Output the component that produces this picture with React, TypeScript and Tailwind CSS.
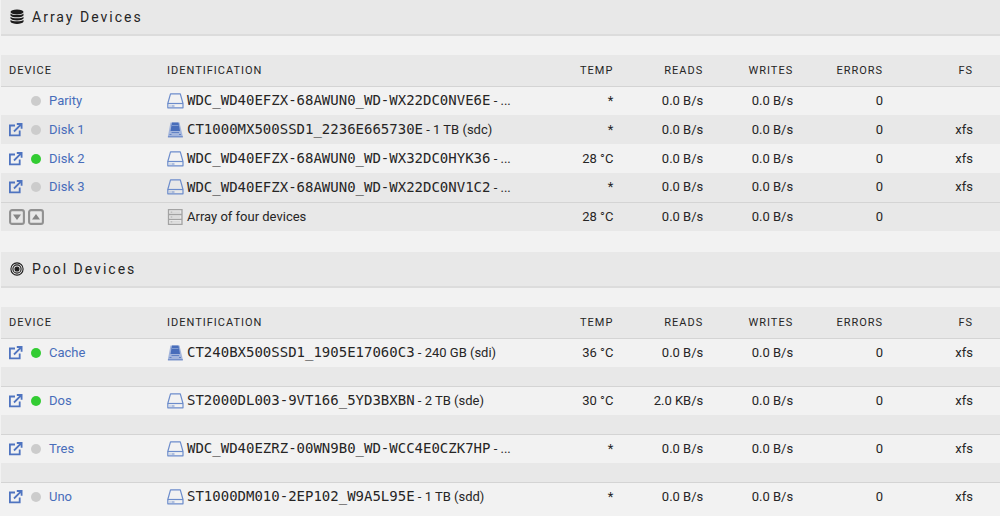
import { Fragment, ReactNode } from 'react';
import clsx from 'clsx';

type Device = {
  name: string;
  active?: boolean;
  kind: 'hdd' | 'ssd';
  id: string;
  info: string;
  temp: string;
  reads: string;
  fs: string;
};

const arrayDevices: Device[] = [
  { name: 'Parity', kind: 'hdd', id: 'WDC_WD40EFZX-68AWUN0_WD-WX22DC0NVE6E', info: '...', temp: '*', reads: '0.0 B/s', fs: '' },
  { name: 'Disk 1', kind: 'ssd', id: 'CT1000MX500SSD1_2236E665730E', info: '1 TB (sdc)', temp: '*', reads: '0.0 B/s', fs: 'xfs' },
  { name: 'Disk 2', active: true, kind: 'hdd', id: 'WDC_WD40EFZX-68AWUN0_WD-WX32DC0HYK36', info: '...', temp: '28 °C', reads: '0.0 B/s', fs: 'xfs' },
  { name: 'Disk 3', kind: 'hdd', id: 'WDC_WD40EFZX-68AWUN0_WD-WX22DC0NV1C2', info: '...', temp: '*', reads: '0.0 B/s', fs: 'xfs' },
];

const poolDevices: Device[] = [
  { name: 'Cache', active: true, kind: 'ssd', id: 'CT240BX500SSD1_1905E17060C3', info: '240 GB (sdi)', temp: '36 °C', reads: '0.0 B/s', fs: 'xfs' },
  { name: 'Dos', active: true, kind: 'hdd', id: 'ST2000DL003-9VT166_5YD3BXBN', info: '2 TB (sde)', temp: '30 °C', reads: '2.0 KB/s', fs: 'xfs' },
  { name: 'Tres', kind: 'hdd', id: 'WDC_WD40EZRZ-00WN9B0_WD-WCC4E0CZK7HP', info: '...', temp: '*', reads: '0.0 B/s', fs: 'xfs' },
  { name: 'Uno', kind: 'hdd', id: 'ST1000DM010-2EP102_W9A5L95E', info: '1 TB (sdd)', temp: '*', reads: '0.0 B/s', fs: 'xfs' },
];

const DatabaseIcon = () => (
  <svg width="14" height="16" viewBox="0 0 14 16" fill="#1c1b1b">
    <ellipse cx="7" cy="3" rx="6.5" ry="2.5" />
    <path d="M.5 4.6C2 6.6 12 6.6 13.5 4.6v1.8C12 9 2 9 .5 6.4z" />
    <path d="M.5 7.7C2 9.7 12 9.7 13.5 7.7v1.8C12 12.1 2 12.1 .5 9.5z" />
    <path d="M.5 10.8C2 12.8 12 12.8 13.5 10.8v2C12 15.6 2 15.6 .5 12.8z" />
  </svg>
);

const TargetIcon = () => (
  <svg width="14" height="14" viewBox="0 0 14 14" fill="none" stroke="#1c1b1b" strokeWidth="1.1">
    <circle cx="7" cy="7" r="6.1" />
    <circle cx="7" cy="7" r="4.1" />
    <circle cx="7" cy="7" r="2" fill="#1c1b1b" />
  </svg>
);

const OpenIcon = () => (
  <svg width="14" height="14" viewBox="0 0 14 14" fill="none" stroke="#4f74c0" strokeWidth="1.8">
    <path d="M6 2.5H.9v9.8h9.8V7.5" />
    <path d="M7.8 1h4.8v4.8M12.3 1.2L5 8.5" />
  </svg>
);

const HddIcon = () => (
  <svg width="17" height="16" viewBox="0 0 17 16" fill="none" stroke="#6c8ccb">
    <path d="M3.5 .8h9.8L16 10.5v4.3H.8v-4.3z" strokeLinejoin="round" strokeWidth="1.2" />
    <path d="M.8 10.5H16" strokeWidth="1.2" />
    <path d="M2.5 13h1M4.5 13h3" />
  </svg>
);

const SsdIcon = () => (
  <svg width="17" height="16" viewBox="0 0 17 16">
    <path d="M3.5 .5h9l3.5 14.8H.7z" fill="#a3b5dc" />
    <path d="M5 .5h6.5l1.5 8.5H3.5z" fill="#486dba" />
    <path d="M5 3.5h6.5" stroke="#8ea6d6" strokeWidth=".8" />
    <path d="M4.5 10.5h7.5M1 14.8h14.8M2.5 12.5h2M12 12.5h2" stroke="#6282c4" />
  </svg>
);

const ServerIcon = () => (
  <svg width="17" height="16" viewBox="0 0 17 16" fill="none" stroke="#a3a3a3">
    <path d="M1.5 .7h13.5v14.6H1.5zM1.5 5.5H15M1.5 10.4H15" strokeWidth="1.3" />
    <path d="M3.5 3.1h2M3.5 8h2M3.5 12.9h2" />
    <path d="M6 3.1h7M6 8h7M6 12.9h7" strokeOpacity=".35" />
  </svg>
);

const SortButton = ({ label, path }: { label: string; path: string }) => (
  <button type="button" aria-label={label} className="cursor-pointer">
    <svg width="16" height="16" viewBox="0 0 16 16">
      <rect x="1.1" y="1.1" width="13.8" height="13.8" rx="2" fill="none" stroke="#919191" strokeWidth="2.1" />
      <path d={path} fill="#858585" />
    </svg>
  </button>
);

const columns = ['Temp', 'Reads', 'Writes', 'Errors', 'FS'];

const Values = ({ values }: { values: string[] }) => (
  <>
    {values.map((value, i) => (
      <td key={columns[i]} className="pr-[27px] text-right">
        {value}
      </td>
    ))}
  </>
);

const DeviceRow = ({ device, shaded }: { device: Device; shaded?: boolean }) => (
  <tr className={clsx('h-[29px]', shaded && 'bg-[#e8e8e8]')}>
    <td className="pl-2">
      <div className="flex items-center">
        <span className="w-[22px]">
          {device.name !== 'Parity' && (
            <a href="#browse" aria-label={`Browse ${device.name}`}>
              <OpenIcon />
            </a>
          )}
        </span>
        <span
          className={clsx(
            'mr-2 size-[10px] rounded-full',
            device.active ? 'bg-[#33cc33]' : 'bg-[#cccccc]'
          )}
        />
        <a href="#device" className="text-[#486dba]">
          {device.name}
        </a>
      </div>
    </td>
    <td className="pl-2">
      <div className="flex items-center gap-[3px] whitespace-nowrap">
        {device.kind === 'hdd' ? <HddIcon /> : <SsdIcon />}
        <span>
          <span className="font-['DejaVu_Sans_Mono',monospace] text-[14px]">{device.id}</span> -{' '}
          {device.info}
        </span>
      </div>
    </td>
    <Values values={[device.temp, device.reads, '0.0 B/s', '0', device.fs]} />
  </tr>
);

const Section = ({ title, icon, children }: { title: string; icon: ReactNode; children: ReactNode }) => (
  <section>
    <h2 className="flex h-9 items-center gap-2 border-b-2 border-[#dcdcdc] bg-[#e8e8e8] pl-[9px] text-[14px] tracking-[2px]">
      {icon}
      {title}
    </h2>
    <table className="mt-[19px] w-full table-fixed border-collapse">
      <colgroup>
        <col className="w-[158px]" />
        <col />
        {columns.map((column) => (
          <col key={column} className="w-[9%]" />
        ))}
      </colgroup>
      <thead>
        <tr className="h-[31px] border-b border-[#d4d4d4] bg-[#e8e8e8] text-[11px] uppercase tracking-[1px]">
          <th className="pt-px pl-2 text-left font-normal">Device</th>
          <th className="pt-px pl-2 text-left font-normal">Identification</th>
          {columns.map((column) => (
            <th key={column} className="pt-px pr-[27px] text-right font-normal">
              {column}
            </th>
          ))}
        </tr>
      </thead>
      <tbody>{children}</tbody>
    </table>
  </section>
);

const App = () => {
  return (
    <main className="flex min-h-screen flex-col gap-[21px] overflow-hidden bg-[#f2f2f2] pl-px font-[Roboto,sans-serif] text-[13px] leading-4 text-[#262525]">
      <Section title="Array Devices" icon={<DatabaseIcon />}>
        {arrayDevices.map((device, i) => (
          <DeviceRow key={device.name} device={device} shaded={i % 2 === 1} />
        ))}
        <tr className="h-[29px] border-t border-[#d4d4d4] bg-[#e8e8e8]">
          <td className="pl-2">
            <div className="flex gap-[3px]">
              <SortButton label="Spin down" path="M4 5.5h8L8 11z" />
              <SortButton label="Spin up" path="M4 10.5h8L8 5z" />
            </div>
          </td>
          <td className="pl-2">
            <div className="flex items-center gap-[3px]">
              <ServerIcon />
              Array of four devices
            </div>
          </td>
          <Values values={['28 °C', '0.0 B/s', '0.0 B/s', '0', '']} />
        </tr>
      </Section>

      <Section title="Pool Devices" icon={<TargetIcon />}>
        {poolDevices.map((device, i) => (
          <Fragment key={device.name}>
            {i > 0 && (
              <tr className="h-[19px] border-b border-[#d4d4d4] bg-[#e8e8e8]">
                <td colSpan={7} />
              </tr>
            )}
            <DeviceRow device={device} />
          </Fragment>
        ))}
      </Section>
    </main>
  );
};

export default App;
